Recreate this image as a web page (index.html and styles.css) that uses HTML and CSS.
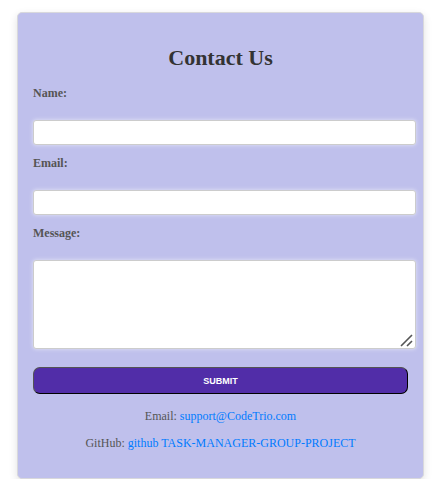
FILE: index.html
```html
<!DOCTYPE html>
<html lang="en">
<head>
<meta charset="utf-8">
<title>Contact Us</title>
<link rel="stylesheet" href="styles.css">
</head>
<body>
<main class="card">
  <h1 class="title">Contact Us</h1>
  <form class="form">
    <label class="label" for="name">Name:</label>
    <input class="field" type="text" id="name">
    <label class="label" for="email">Email:</label>
    <input class="field" type="email" id="email">
    <label class="label" for="message">Message:</label>
    <div class="area-wrap">
      <textarea class="field area" id="message"></textarea>
      <svg class="grip" width="13" height="13" viewBox="0 0 13 13" aria-hidden="true">
        <path d="M1 12L12 1M7 12L12 7" fill="none" stroke="#555" stroke-width="1.6"/>
      </svg>
    </div>
    <button class="submit" type="submit">SUBMIT</button>
  </form>
  <p class="info">Email: <a href="mailto:support@CodeTrio.com">support@CodeTrio.com</a></p>
  <p class="info">GitHub: <a href="#">github TASK-MANAGER-GROUP-PROJECT</a></p>
</main>
</body>
</html>
```
FILE: styles.css
```css
body {
  margin: 0;
  background: #fff;
  font-family: "Liberation Serif", "Times New Roman", serif;
  font-size: 12px;
  color: #555;
}
.card {
  margin: 12px 24px 0 17px;
  padding: 32px 15px 28px;
  border: 1px solid #d8d8dc;
  border-radius: 5px;
  background: #bfc0ec;
  box-shadow: 0 3px 8px rgba(0, 0, 0, 0.12);
}
.title {
  margin: 0 0 14px;
  font-size: 22px;
  line-height: 26px;
  text-align: center;
  color: #333;
}
.form {
  display: flex;
  flex-direction: column;
}
.label {
  margin-bottom: 19px;
  line-height: 16px;
  font-weight: bold;
}
.field {
  box-sizing: border-box;
  height: 25px;
  margin: 0 -8px 10px 0;
  padding: 4px;
  border: 1px solid #ccc;
  border-radius: 3px;
  background: #fff;
  box-shadow: 0 0 4px rgba(255, 255, 255, 0.6);
}
.area-wrap {
  position: relative;
  display: flex;
  margin: 0 -8px 18px 0;
}
.area {
  flex: 1;
  height: 89px;
  margin: 0;
  resize: vertical;
}
.area::-webkit-resizer {
  display: none;
}
.grip {
  position: absolute;
  right: 3px;
  bottom: 2px;
  pointer-events: none;
}
.submit {
  height: 27px;
  padding: 0;
  border: 1px outset #000;
  border-radius: 7px;
  background: #512da8;
  color: #fff;
  font: bold 9px "Liberation Sans", Arial, sans-serif;
}
.info {
  margin: 14px 0 0;
  line-height: 13px;
  text-align: center;
}
.form + .info {
  margin-top: 16px;
}
.info a {
  color: #007bff;
  text-decoration: none;
}
```
